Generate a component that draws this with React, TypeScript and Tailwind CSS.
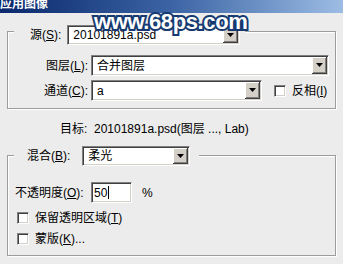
const font = "font-['Liberation_Sans','Noto_Sans_CJK_SC',sans-serif]";

function Arrow() {
  return (
    <div className="flex h-full w-[15px] items-center justify-center border-r border-b border-r-[#404040] border-b-[#404040] bg-[#d4d0c8] shadow-[inset_1px_1px_0_#ffffff,inset_-1px_-1px_0_#808080]">
      <svg width="7" height="4" viewBox="0 0 7 4">
        <path d="M0 0h7L3.5 4z" fill="#000" />
      </svg>
    </div>
  );
}

function Select({ value, className }: { value: string; className: string }) {
  return (
    <div
      className={`flex items-stretch border border-t-[#808080] border-l-[#808080] border-r-white border-b-white bg-white p-[1px] shadow-[inset_1px_1px_0_#404040,inset_-1px_-1px_0_#d4d0c8] ${className}`}
    >
      <span className="flex flex-1 items-center pl-[4px] text-[12px] leading-none text-black">{value}</span>
      <Arrow />
    </div>
  );
}

function Check() {
  return (
    <span className="block h-[12px] w-[12px] border border-t-[#808080] border-l-[#808080] border-r-white border-b-white bg-white shadow-[inset_1px_1px_0_#404040,inset_-1px_-1px_0_#d4d0c8]" />
  );
}

export default function App() {
  return (
    <div className={`relative h-[264px] w-[343px] overflow-hidden bg-[#ececec] text-[12px] text-black ${font}`}>
      <div className="h-[15px] bg-gradient-to-r from-[#0b286c] via-[#3c64a4] to-[#9dbde4]">
        <span className="-mt-[2px] block text-[12px] font-bold leading-[12px] text-white">应用图像</span>
      </div>

      <div className="mx-[7px] mt-[18px] h-[78px] border border-[#9c9c9c] shadow-[inset_1px_1px_0_#ffffff,1px_1px_0_#ffffff]">
        <div className="-mt-[7px] ml-[6px] flex w-fit items-center bg-[#ececec] pl-[16px] pr-[5px]">
          <span className="mr-[6px]">
            源(<u>S</u>):
          </span>
          <Select value="20101891a.psd" className="h-[20px] w-[173px]" />
        </div>

        <div className="mt-[10px] flex items-center">
          <span className="w-[80px] text-right">
            图层(<u>L</u>):
          </span>
          <Select value="合并图层" className="ml-[3px] h-[21px] w-[238px]" />
        </div>

        <div className="mt-[4px] flex items-center">
          <span className="w-[80px] text-right">
            通道(<u>C</u>):
          </span>
          <Select value="a" className="ml-[3px] h-[21px] w-[171px]" />
          <span className="ml-[12px]">
            <Check />
          </span>
          <span className="ml-[6px]">
            反相(<u>I</u>)
          </span>
        </div>
      </div>

      <div className="mt-[13px] pl-[60px] leading-[14px]">目标:&nbsp; 20101891a.psd(图层 ..., Lab)</div>

      <div className="mx-[7px] mt-[19px] h-[101px] border border-[#9c9c9c] shadow-[inset_1px_1px_0_#ffffff,1px_1px_0_#ffffff]">
        <div className="-mt-[10px] ml-[6px] flex w-fit items-center bg-[#ececec] pl-[13px] pr-[9px]">
          <span className="mr-[12px]">
            混合(<u>B</u>):
          </span>
          <Select value="柔光" className="h-[20px] w-[108px]" />
        </div>

        <div className="mt-[16px] flex items-center">
          <span className="w-[83px] pl-[7px]">
            不透明度(<u>O</u>):
          </span>
          <div className="flex h-[21px] w-[41px] items-center border border-t-[#808080] border-l-[#808080] border-r-white border-b-white bg-white pl-[2px] shadow-[inset_1px_1px_0_#404040,inset_-1px_-1px_0_#d4d0c8]">
            <span className="leading-none">50</span>
            <span className="ml-[1px] h-[13px] w-[1px] bg-black" />
          </div>
          <span className="ml-[10px]">%</span>
        </div>

        <div className="ml-[9px] mt-[9px] flex items-center">
          <Check />
          <span className="ml-[6px] leading-[12px]">
            保留透明区域(<u>T</u>)
          </span>
        </div>

        <div className="ml-[9px] mt-[9px] flex items-center">
          <Check />
          <span className="ml-[6px] leading-[12px]">
            蒙版(<u>K</u>)...
          </span>
        </div>
      </div>

      <div className="pointer-events-none absolute left-[94px] top-[5px] text-[22px] font-bold tracking-[-0.4px] text-white [-webkit-text-stroke:4px_#163a70] [paint-order:stroke_fill]">
        www.68ps.com
      </div>
    </div>
  );
}
